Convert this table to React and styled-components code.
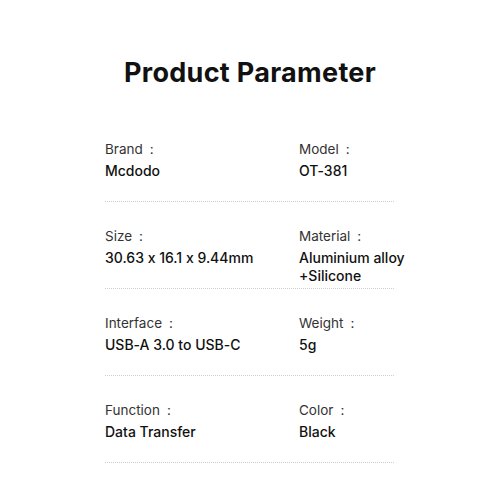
import React from "react";
import styled, { createGlobalStyle } from "styled-components";

const GlobalStyle = createGlobalStyle`
  body {
    margin: 0;
    background: #fff;
    font-family: Inter, "Noto Sans", sans-serif;
    font-feature-settings: "calt" 0;
  }
`;

const params = [
  [
    { label: "Brand", value: ["Mcdodo"] },
    { label: "Model", value: ["OT-381"] },
  ],
  [
    { label: "Size", value: ["30.63 x 16.1 x 9.44mm"] },
    { label: "Material", value: ["Aluminium alloy", "+Silicone"] },
  ],
  [
    { label: "Interface", value: ["USB-A 3.0 to USB-C"] },
    { label: "Weight", value: ["5g"] },
  ],
  [
    { label: "Function", value: ["Data Transfer"] },
    { label: "Color", value: ["Black"] },
  ],
];

export default function App() {
  return (
    <>
      <GlobalStyle />
      <Page>
        <Title>Product Parameter</Title>
        <Table>
          {params.map((row, i) => (
            <Row key={i}>
              {row.map((cell) => (
                <Cell key={cell.label}>
                  <Label>
                    {cell.label}
                    <Colon>:</Colon>
                  </Label>
                  <Value>
                    {cell.value.map((v) => (
                      <div key={v}>{v}</div>
                    ))}
                  </Value>
                </Cell>
              ))}
            </Row>
          ))}
        </Table>
      </Page>
    </>
  );
}

const Page = styled.div`
  width: 500px;
  height: 500px;
  padding-left: 105px;
  box-sizing: border-box;
  display: flex;
  flex-direction: column;
`;

const Title = styled.h1`
  margin: 55px 0 0 -105px;
  width: 500px;
  text-align: center;
  font-size: 27px;
  line-height: 36px;
  font-weight: 700;
  color: #111;
  letter-spacing: 0.3px;
`;

const Table = styled.div`
  margin-top: 24px;
  width: 289px;
`;

const Row = styled.div`
  height: 86px;
  border-bottom: 1px dotted #cfcfcf;
  display: grid;
  grid-template-columns: 194px 1fr;
`;

const Cell = styled.div`
  padding-top: 25px;
  display: flex;
  flex-direction: column;
`;

const Label = styled.div`
  font-size: 13.5px;
  line-height: 18px;
  color: #333;
  white-space: nowrap;
`;

const Colon = styled.span`
  margin-left: 7px;
`;

const Value = styled.div`
  margin-top: 4px;
  font-size: 14px;
  line-height: 18px;
  font-weight: 500;
  color: #111;
  white-space: nowrap;
`;
